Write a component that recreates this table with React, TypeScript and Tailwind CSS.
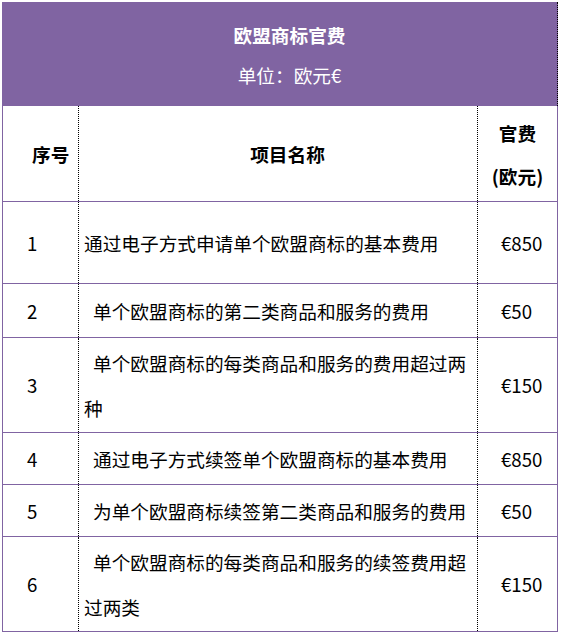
import React from "react";

const font = { fontFamily: '"Noto Sans CJK SC", "Noto Sans", sans-serif' };

type Row = { n: string; text: string; fee: string; h: string; indent: boolean };

const rows: Row[] = [
  { n: "1", text: "通过电子方式申请单个欧盟商标的基本费用", fee: "€850", h: "h-[82px]", indent: false },
  { n: "2", text: "单个欧盟商标的第二类商品和服务的费用", fee: "€50", h: "h-[54px]", indent: true },
  { n: "3", text: "单个欧盟商标的每类商品和服务的费用超过两种", fee: "€150", h: "h-[95px]", indent: true },
  { n: "4", text: "通过电子方式续签单个欧盟商标的基本费用", fee: "€850", h: "h-[52px]", indent: true },
  { n: "5", text: "为单个欧盟商标续签第二类商品和服务的费用", fee: "€50", h: "h-[52px]", indent: true },
  { n: "6", text: "单个欧盟商标的每类商品和服务的续签费用超过两类", fee: "€150", h: "h-[95px]", indent: true },
];

export default function App() {
  return (
    <div className="w-[563px] h-[636px] bg-white pt-[2px] pl-[2px] text-[18.67px] text-black" style={font}>
      <div className="w-[556px]">
        <div className="h-[104px] bg-[#8064A2] border-r border-dotted border-r-black text-white flex flex-col items-center pt-[13px] pl-[20px]">
          <div className="font-bold leading-[40px]">欧盟商标官费</div>
          <div className="leading-[40px]">单位：欧元€</div>
        </div>
        <div className="border-x border-b border-[#8064A2]">
          <div className="flex h-[95px]">
            <div className="w-[75px] flex items-center pl-[29px] font-bold">序号</div>
            <div className="w-[399px] border-l border-dotted border-l-black flex items-center justify-center pl-[19px] font-bold">
              项目名称
            </div>
            <div className="flex-1 border-l border-dotted border-l-black flex flex-col items-center justify-center font-bold leading-[43px]">
              <div>官费</div>
              <div>(欧元)</div>
            </div>
          </div>
          {rows.map((r) => (
            <div key={r.n} className={`flex border-t border-t-[#8064A2] ${r.h}`}>
              <div className="w-[75px] flex items-center pl-[24px]">{r.n}</div>
              <div className="w-[399px] border-l border-dotted border-l-black flex items-center pl-[5px] pr-[8px]">
                <div className={`leading-[45px] ${r.indent ? "indent-[9px]" : ""}`}>{r.text}</div>
              </div>
              <div className="flex-1 border-l border-dotted border-l-black flex items-center pl-[23px]">{r.fee}</div>
            </div>
          ))}
        </div>
      </div>
    </div>
  );
}
